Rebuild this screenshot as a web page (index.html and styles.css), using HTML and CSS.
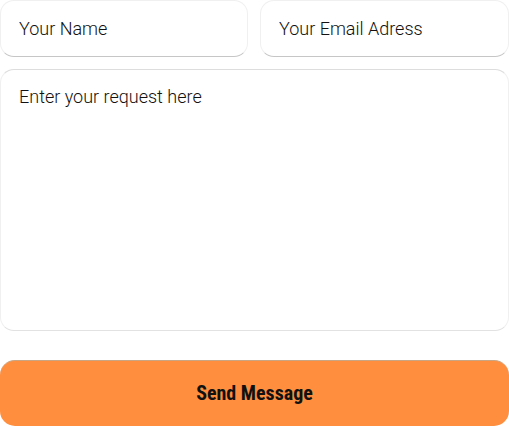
FILE: index.html
```html
<!doctype html>
<html lang="en">
<head>
  <meta charset="utf-8">
  <title>Contact</title>
  <link rel="stylesheet" href="styles.css">
</head>
<body>
  <form class="contact">
    <div class="contact-row">
      <input class="field" type="text" placeholder="Your Name">
      <input class="field" type="email" placeholder="Your Email Adress">
    </div>
    <textarea class="field message" placeholder="Enter your request here"></textarea>
    <button class="send" type="button">Send Message</button>
  </form>
</body>
</html>
```

FILE: styles.css
```css
body {
  margin: 0;
  background: #FFFFFF;
  font-family: Roboto, "Liberation Sans", sans-serif;
}
.contact {
  display: flex;
  flex-direction: column;
  width: 509px;
}
.contact-row {
  display: grid;
  grid-template-columns: 248px 249px;
  gap: 12px;
  margin-bottom: 12px;
}
.field {
  box-sizing: border-box;
  height: 57px;
  margin: 0;
  padding: 0 18px;
  border: 1px solid #F0F0F0;
  border-bottom-color: #C6C6C6;
  border-radius: 14px;
  background: #FFFFFF;
  font-family: Roboto, "Liberation Sans", sans-serif;
  font-weight: 300;
  font-size: 18px;
  color: #111111;
  outline: none;
}
.field::placeholder {
  color: #111111;
  opacity: 1;
}
.message {
  height: 262px;
  padding: 16px 18px;
  resize: none;
  line-height: 21px;
  border-top-color: #DDDDDD;
  border-bottom-color: #E2E2E2;
}
.send {
  margin-top: 29px;
  height: 66px;
  padding-bottom: 3px;
  border: none;
  border-top: 1px solid #C9A584;
  border-radius: 15px;
  background: #FF8F3F;
  font-family: Roboto, "Liberation Sans", sans-serif;
  font-weight: bold;
  font-size: 20px;
  font-stretch: condensed;
  color: #111111;
  cursor: pointer;
}
```
